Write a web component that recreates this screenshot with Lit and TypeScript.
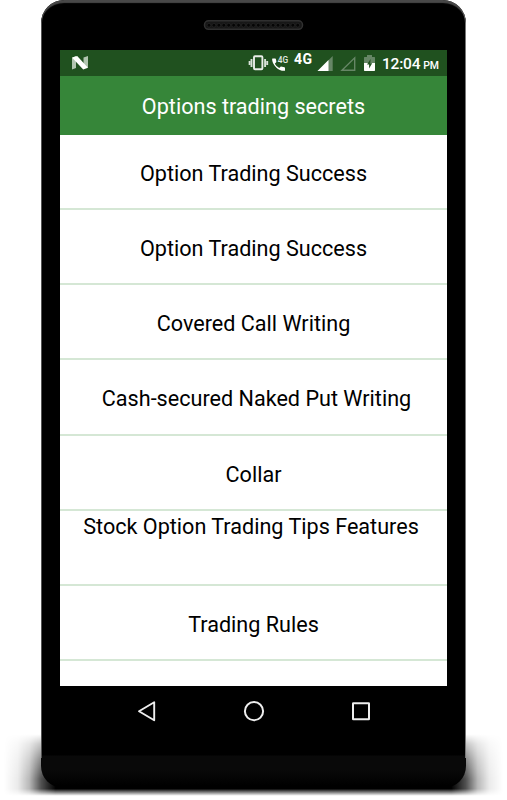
import { LitElement, html, css, svg } from "lit";
import { customElement } from "lit/decorators.js";
import { classMap } from "lit/directives/class-map.js";

interface Topic { label: string; kind?: string }

const topics: Topic[] = [
  { label: "Option Trading Success" },
  { label: "Option Trading Success" },
  { label: "Covered Call Writing" },
  { label: "Cash-secured Naked Put Writing", kind: "wide" },
  { label: "Collar" },
  { label: "Stock Option Trading Tips Features", kind: "top" },
  { label: "Trading Rules" },
  { label: "" },
];

@customElement("status-bar")
class StatusBar extends LitElement {
  static styles = css`
    :host { display: flex; height: 26px; background: #20511f; color: #fff; font-family: Roboto, sans-serif; }
    svg { display: block; flex: none; }
    .nougat { margin: 6px 0 0 12px; }
    .vibrate { margin: 5px 0 0 160px; }
    .call { margin: 5px 0 0 3px; }
    .net { margin: 1px 0 0 5px; width: 19px; font-size: 14px; line-height: 16px; font-weight: 700; letter-spacing: .4px; }
    .signal { margin: 6px 0 0 4px; }
    .signal2 { margin: 6px 0 0 6px; }
    .battery { margin: 5px 0 0 7px; }
    .time { margin: 5px 0 0 7px; font-size: 15.500px; line-height: 18px; font-weight: 500; white-space: nowrap; letter-spacing: -.2px; }
    .pm { font-size: 10.500px; margin-left: 3px; letter-spacing: -.2px; }
  `;
  render() {
    return html`
      <svg class="nougat" width="16" height="14" viewBox="0 0 16 14">
        <path d="M0 2 4 0V12L0 13.500ZM11.500 1.500 16 0V11.500L11.500 12Z" fill="#b1c5b0"/>
        <path d="M0 1.600 5.200 0 16 11.800 11.200 13.600Z" fill="#fff"/>
      </svg>
      <svg class="vibrate" width="21" height="16" viewBox="0 0 21 16">
        <rect x="6" y="1.300" width="8.400" height="13" rx="1" fill="none" stroke="#e9eee9" stroke-width="1.900"/>
        <path d="M3.500 4v8M17.100 4v8" stroke="#d8e2d8" stroke-width="1.900"/>
        <path d="M1.600 6v4M19.200 6v4" stroke="#d8e2d8" stroke-width="1.900"/>
      </svg>
      <svg class="call" width="17" height="17" viewBox="0 0 17 17">
        <path d="M.6 3.500H3.300Q4 3.500 4.100 5L4.400 6.900 2.800 8.700Q4.400 11.600 7.200 13.100L8.900 11.500 12.400 12.200Q13 12.400 13 13V15.800Q8 16.200 4.200 12.500.1 8.500.1 4Q.1 3.500.6 3.500Z" fill="#fff"/>
        <text x="5.800" y="8.200" font-size="9.800" font-weight="500" textLength="10.400" lengthAdjust="spacingAndGlyphs" fill="#e3eae3">4G</text>
      </svg>
      <span class="net">4G</span>
      <svg class="signal" width="17" height="15" viewBox="0 0 17 15">
        <path d="M.5 15 15.700 0V15Z" fill="#668666"/><path d="M.5 15 11.500 4V15Z" fill="#fff"/>
      </svg>
      <svg class="signal2" width="17" height="15" viewBox="0 0 17 15">
        <path d="M2 14.300 14.700 1.800V14.300Z" fill="none" stroke="#668666" stroke-width="1.400"/>
      </svg>
      <svg class="battery" width="11" height="16" viewBox="0 0 11 16">
        <path d="M0 2.500Q0 2 .6 2H3V0H8V2H10.400Q11 2 11 2.600V9H0Z" fill="#668666"/>
        <path d="M0 8H11V15.300Q11 16 10.300 16H.7Q0 16 0 15.300Z" fill="#fff"/>
        <path d="M6.600 4 3 9.600H5.100V13.500L8.200 8.300H6.300Z" fill="#20511f"/>
      </svg>
      <span class="time">12:04<span class="pm">PM</span></span>`;
  }
}

@customElement("nav-bar")
class NavBar extends LitElement {
  static styles = css`
    :host { display: flex; justify-content: center; gap: 85px; height: 50px; align-items: center; }
    svg { display: block; fill: none; stroke: #eee; stroke-width: 2; }
  `;
  render() {
    return html`
      <svg width="22" height="22" viewBox="0 0 22 22"><path d="M3 11.200 18.200 2.200V20.200Z" stroke-linejoin="round" stroke-width="1.900"/></svg>
      <svg width="22" height="22" viewBox="0 0 22 22"><circle cx="11" cy="11.200" r="9.100"/></svg>
      <svg width="22" height="22" viewBox="0 0 22 22"><rect x="3" y="3.200" width="16" height="16" rx=".3"/></svg>`;
  }
}

@customElement("app-root")
class AppRoot extends LitElement {
  static styles = css`
    :host { display: block; position: relative; width: 507px; height: 800px; overflow: hidden; background: #fff; font-family: Roboto, sans-serif; }
    .shadow { position: absolute; left: 0; top: 730px; display: block; }
    .phone {
      position: relative; box-sizing: border-box; width: 425px; height: 788px; margin-left: 41px; padding: 0 19px;
      display: flex; flex-direction: column; overflow: hidden;
      border-radius: 23px 23px 22px 22px;
      background: linear-gradient(#000 0 755px, #090909 756px 770px, #000 786px);
    }
    .phone::after {
      content: ""; position: absolute; inset: 0 0 30px; border-radius: 23px 23px 0 0; pointer-events: none;
      box-shadow: inset 0 4px 1px -1px #484848, inset 1px 0 0 #555, inset -1px 0 0 #777;
    }
    .earpiece { flex: none; height: 50px; display: flex; justify-content: center; }
    .earpiece svg { margin-top: 20px; display: block; }
    .screen { flex: none; width: 387px; height: 636px; overflow: hidden; background: #fff; display: flex; flex-direction: column; box-sizing: border-box; }
    status-bar { flex: none; }
    .title { flex: none; height: 59px; background: #368639; color: #fff; display: flex; align-items: center; justify-content: center; font-size: 21.600px; padding-top: 2px; box-sizing: border-box; }
    .row { flex: none; box-sizing: border-box; height: 75.150px; border-bottom: 2px solid #d5e7d5; display: flex; align-items: center; justify-content: center; padding-top: 5px; font-size: 21.600px; line-height: 26px; color: #000; white-space: nowrap; }
    .wide { padding-left: 6px; }
    .top { align-items: flex-start; padding: 3px 5px 0 0; }
  `;
  render() {
    return html`
      <svg class="shadow" width="507" height="70" viewBox="0 0 507 70">
        <defs>
          <linearGradient id="h" gradientUnits="userSpaceOnUse" x1="0" x2="507" y1="0" y2="0">
            <stop offset=".008" stop-color="#000" stop-opacity="0"/>
            <stop offset=".035" stop-color="#000" stop-opacity=".08"/>
            <stop offset=".058" stop-color="#000" stop-opacity=".28"/>
            <stop offset=".081" stop-color="#000" stop-opacity=".68"/>
            <stop offset=".11" stop-color="#000"/>
            <stop offset=".89" stop-color="#000"/>
            <stop offset=".919" stop-color="#000" stop-opacity=".68"/>
            <stop offset=".942" stop-color="#000" stop-opacity=".28"/>
            <stop offset=".965" stop-color="#000" stop-opacity=".08"/>
            <stop offset=".992" stop-color="#000" stop-opacity="0"/>
          </linearGradient>
          <linearGradient id="v" gradientUnits="userSpaceOnUse" x1="0" x2="0" y1="0" y2="70">
            <stop offset=".06" stop-color="#000"/>
            <stop offset=".2" stop-color="#555"/>
            <stop offset=".42" stop-color="#aaa"/>
            <stop offset=".7" stop-color="#fff"/>
            <stop offset=".84" stop-color="#fff"/>
            <stop offset=".94" stop-color="#000"/>
          </linearGradient>
          <mask id="m"><rect width="507" height="70" fill="url(#v)"/></mask>
        </defs>
        <rect width="507" height="70" fill="url(#h)" mask="url(#m)"/>
      </svg>
      <main class="phone">
        <div class="earpiece">
          <svg width="101" height="11" viewBox="0 0 101 11">
            <rect x="1.500" y=".8" width="98" height="8.500" rx="4" fill="#171717" stroke="#303030" stroke-width="1.500"/>
            ${Array.from({ length: 19 }, (_, i) => svg`<circle cx=${6 + i * 4.930} cy="5.200" r="1.900" fill="#050505" stroke="#2b2b2b" stroke-width=".6"/>`)}
          </svg>
        </div>
        <section class="screen">
          <status-bar></status-bar>
          <header class="title">Options trading secrets</header>
          ${topics.map((t) => html`<div class=${classMap({ row: true, wide: t.kind === "wide", top: t.kind === "top" })}><span class="label">${t.label}</span></div>`)}
        </section>
        <nav-bar></nav-bar>
      </main>`;
  }
}
